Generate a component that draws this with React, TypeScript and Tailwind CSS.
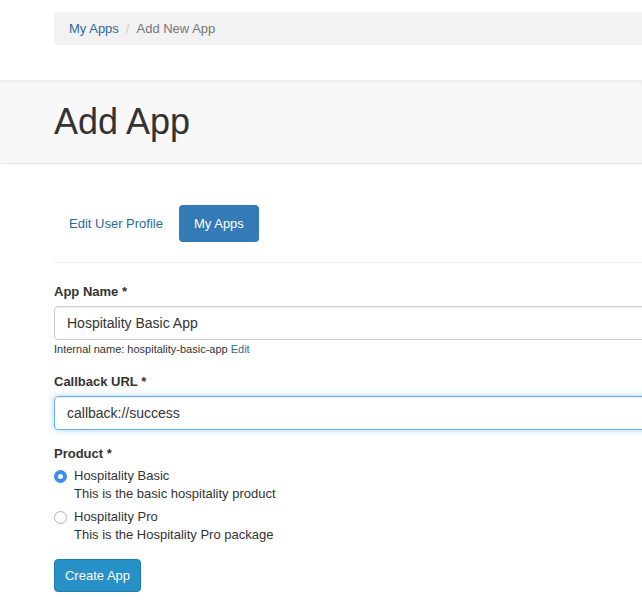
export default function App() {
  return (
    <div className="min-h-screen bg-white overflow-hidden text-[#333]" style={{ fontFamily: '"Liberation Sans", Arial, sans-serif' }}>
      {/* breadcrumb */}
      <div className="pt-3 pl-[54px]">
        <div className="flex h-[33px] w-[640px] items-center rounded-l bg-[#f2f2f2] pl-[15px] text-[13px]">
          <a className="text-[#2a6aa0]">My Apps</a>
          <span className="px-[7px] text-[#ccc]">/</span>
          <span className="text-[#777]">Add New App</span>
        </div>
      </div>

      {/* page header */}
      <div className="mt-[35px] flex h-[84px] items-center border-b border-[#e3e3e3] bg-[#f8f8f8] pl-[54px] shadow-[inset_0_4px_4px_-2px_rgba(0,0,0,0.06)]">
        <h1 className="text-[36px] leading-none">Add App</h1>
      </div>

      <div className="pl-[54px]">
        {/* tabs */}
        <div className="mt-[41px] flex items-center text-[13px]">
          <a className="flex h-[37px] items-center px-[15px] text-[#2a6aa0]">Edit User Profile</a>
          <a className="ml-px flex h-[37px] w-[80px] items-center justify-center rounded bg-[#337ab7] text-white">My Apps</a>
        </div>

        <div className="mt-5 h-px w-[640px] bg-[#eee]" />

        {/* form */}
        <form className="w-[640px]">
          <label className="mt-5 block text-[13px] font-bold leading-[18px]">App Name *</label>
          <input
            defaultValue="Hospitality Basic App"
            className="mt-[5px] block h-[34px] w-full rounded-l border border-[#ccc] px-3 text-[14px] text-[#333] shadow-[inset_0_1px_1px_rgba(0,0,0,0.075)] outline-none"
          />
          <p className="mt-[2px] text-[11px] leading-[14px]">
            Internal name: hospitality-basic-app <a className="text-[#2a6aa0]">Edit</a>
          </p>

          <label className="mt-[17px] block text-[13px] font-bold leading-[18px]">Callback URL *</label>
          <input
            defaultValue="callback://success"
            className="mt-[5px] block h-[34px] w-full rounded-l border border-[#66afe9] px-3 text-[14px] text-[#333] shadow-[inset_0_1px_1px_rgba(0,0,0,0.075),0_0_6px_rgba(102,175,233,0.6)] outline-none"
          />

          <label className="mt-[15px] block text-[13px] font-bold leading-[18px]">Product *</label>

          <div className="mt-[4px] flex">
            <span className="mt-[3px] flex h-[13px] w-[13px] shrink-0 items-center justify-center rounded-full bg-[#3b8af5]">
              <span className="h-[5px] w-[5px] rounded-full bg-white" />
            </span>
            <div className="ml-[7px] text-[13px] leading-[18px]">
              <div>Hospitality Basic</div>
              <div>This is the basic hospitality product</div>
            </div>
          </div>

          <div className="mt-[5px] flex">
            <span className="mt-[3px] h-[13px] w-[13px] shrink-0 rounded-full border border-[#b5b5b5] bg-white" />
            <div className="ml-[7px] text-[13px] leading-[18px]">
              <div>Hospitality Pro</div>
              <div>This is the Hospitality Pro package</div>
            </div>
          </div>

          <button
            type="button"
            className="mt-[15px] h-[33px] w-[87px] rounded border border-[#1b7fb3] bg-[#2790c7] text-[13px] text-white"
          >
            Create App
          </button>
        </form>
      </div>
    </div>
  );
}
